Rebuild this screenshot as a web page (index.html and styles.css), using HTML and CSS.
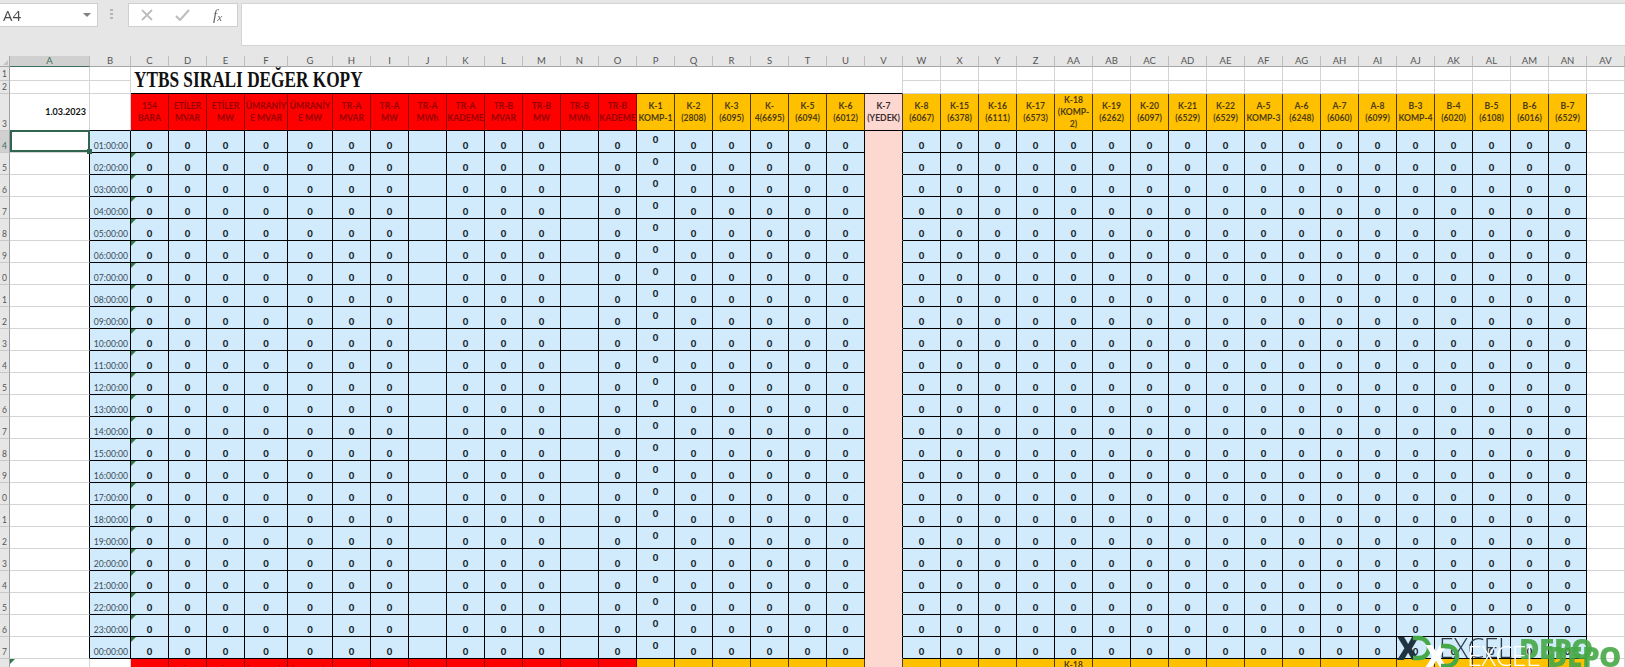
FILE: index.html
```html
<!DOCTYPE html>
<html lang="tr">
<head>
<meta charset="utf-8">
<title>YTBS Sıralı Değer Kopy</title>
<link rel="stylesheet" href="styles.css">
</head>
<body>
<header class="formula-bar">
  <div class="name-box"><span class="name-text">A4</span><span class="name-arrow"></span></div>
  <div class="grip"><i></i><i></i><i></i></div>
  <div class="fx-box">
    <svg class="fx-icon" width="12" height="12" viewBox="0 0 12 12"><path d="M1 1l10 10M11 1L1 11" fill="none" stroke="#bdbdbd" stroke-width="1.8"/></svg>
    <svg class="fx-icon" width="15" height="12" viewBox="0 0 15 12"><path d="M1 7l4 4L14 1" fill="none" stroke="#bdbdbd" stroke-width="2"/></svg>
    <span class="fx-text">f<sub>x</sub></span>
  </div>
  <div class="formula-input"></div>
</header>
<main class="sheet">
  <table class="grid" id="grid"></table>
</main>
<div class="wm wm-dark">
  <span class="wm-x">X</span>
  <svg class="wm-arc" width="22" height="26" viewBox="0 0 22 26"><path d="M2 3h6a10 10 0 0 1 0 20H2" fill="none" stroke="#46a846" stroke-width="4.5"/></svg>
  <span class="wm-excel">EXCEL</span>
  <span class="wm-depo">DEPO</span>
</div>
<div class="wm wm-light">
  <span class="wm-x">X</span>
  <svg class="wm-arc" width="22" height="26" viewBox="0 0 22 26"><path d="M2 3h6a10 10 0 0 1 0 20H2" fill="none" stroke="#46a846" stroke-width="4.5"/></svg>
  <span class="wm-excel">EXCEL</span>
  <span class="wm-depo">DEPO</span>
</div>
<script src="script.js"></script>
</body>
</html>
```
FILE: styles.css
```css
* { box-sizing: border-box; }
html, body { margin: 0; height: 100%; }
body {
  position: relative;
  width: 1625px;
  height: 667px;
  overflow: hidden;
  background: #e6e6e6;
  font-family: Lato, "Open Sans", sans-serif;
}

/* formula bar */
.formula-bar {
  display: flex;
  align-items: flex-start;
  height: 56px;
  padding-top: 3px;
  background: #e6e6e6;
  filter: blur(.4px);
}
.name-box {
  display: flex;
  align-items: center;
  justify-content: space-between;
  width: 98px;
  height: 24px;
  padding: 0 6px 0 3px;
  background: #fff;
  border: 1px solid #cfcfcf;
  border-left: 0;
}
.name-text { font: 15px "Open Sans", sans-serif; color: #4a4a4a; }
.name-arrow {
  width: 0; height: 0;
  border-left: 4px solid transparent;
  border-right: 4px solid transparent;
  border-top: 4px solid #808080;
}
.grip { display: flex; flex-direction: column; gap: 2px; width: 30px; padding: 6px 0 0 12px; }
.grip i { width: 3px; height: 2px; background: #b5b5b5; }
.fx-box {
  display: flex;
  align-items: center;
  width: 110px;
  height: 24px;
  padding-left: 12px;
  gap: 22px;
  background: #fff;
  border: 1px solid #cfcfcf;
}
.fx-text { font: italic 15px "Liberation Serif", serif; color: #666; margin-left: 1px; }
.fx-text sub { font-size: 11px; vertical-align: -1px; }
.formula-input {
  flex: 1;
  height: 43px;
  margin-left: 3px;
  background: #fff;
  border: 1px solid #d4d4d4;
  border-right: 0;
}

/* sheet */
.sheet { height: 611px; overflow: hidden; background: #fff; filter: blur(.4px); }
.grid {
  table-layout: fixed;
  width: 1625px;
  border-collapse: separate;
  border-spacing: 0;
  font-size: 9px;
}
.grid th, .grid td {
  padding: 0;
  overflow: hidden;
  white-space: nowrap;
  border-right: 1px solid #d4d4d4;
  border-bottom: 1px solid #d4d4d4;
  color: #17242c;
  font-weight: 700;
  line-height: 12px;
  text-align: center;
}
.col-rn { width: 10px; }
.col-a { width: 80px; }
.col-b { width: 41px; }
.col-f { width: 43px; }
.col-g { width: 45px; }
.col-n { width: 38px; }

.row-head { height: 11px; }
.row-1 { height: 14px; }
.row-2 { height: 13px; }
.row-3, .row-28 { height: 36px; }
.row-data { height: 22px; }

/* sheet headings */
.grid .col-head {
  background: #e6e6e6;
  border-right: 1px solid #bdbdbd;
  border-bottom: 1px solid #a6a6a6;
  color: #555;
  font-weight: 400;
  font-size: 9.5px;
  line-height: 10px;
}
.grid .col-head.active {
  background: #d0d0d0;
  border-bottom: 1px solid #3d6e58;
  color: #3d6e58;
}
.grid .corner { position: relative; border-right: 1px solid #a6a6a6; }
.corner::after {
  content: "";
  position: absolute;
  right: 1px;
  bottom: 1px;
  width: 0; height: 0;
  border-left: 5px solid transparent;
  border-bottom: 5px solid #c4c4c4;
}
.grid .row-num {
  background: #e6e6e6;
  border-right: 1px solid #9e9e9e;
  border-bottom: 1px solid #c8c8c8;
  color: #555;
  font-weight: 400;
  font-size: 8.5px;
  line-height: 11px;
  vertical-align: bottom;
  text-align: center;
}
.grid .row-num.active { background: #d0d0d0; color: #3d6e58; }

/* content */
.grid .title {
  background: #fff;
  border-bottom: 1px solid #000;
  text-align: left;
  padding-left: 3px;
  font: 700 23px/26px "Liberation Serif", serif;
  color: #111;
}
.title-text { display: inline-block; transform: scaleX(.75); transform-origin: left center; }
.grid .date { text-align: right; padding-right: 3px; vertical-align: middle; font-size: 9px; color: #111; }
.grid .hd { vertical-align: middle; font-size: 8.6px; border-top: 0; }
.grid .hd.red { background: #ff0000; color: #960000; border-right-color: #8f0000; border-bottom-color: #000; }
.grid .hd.org { background: #ffc000; color: #4c3c10; border-right-color: #4a3a08; border-bottom-color: #000; }
.grid .hd.pch { background: #fcd8d1; color: #3a2c2c; border-right-color: #4a3a3a; border-bottom-color: #000; }
.grid .top-line { border-bottom-color: #000; }
.grid .edge { border-right-color: #000; }
.grid .time {
  background: #d1ebfc;
  border-right-color: #000;
  border-bottom-color: #000;
  color: #3b4a55;
  font-weight: 400;
  font-size: 8.6px;
  vertical-align: bottom;
  text-align: right;
  padding-right: 2px;
}
.grid .val {
  background: #d1ebfc;
  border-right-color: #000;
  border-bottom-color: #000;
  font-size: 9.5px;
  font-weight: 900;
  vertical-align: bottom;
}
.grid .val.mid { vertical-align: middle; padding-bottom: 3px; }
.grid .val.pch { background: #fcd8d1; border-bottom-color: #fcd8d1; }
.tick { position: relative; }
.tick::before {
  content: "";
  position: absolute;
  left: 0;
  top: 0;
  width: 0; height: 0;
  border-top: 5px solid #2f7a46;
  border-right: 5px solid transparent;
}
.sel { position: relative; }
.sel::before {
  content: "";
  position: absolute;
  inset: -1px -1px 0 0;
  border: 2px solid #31654f;
}
.sel::after {
  content: "";
  position: absolute;
  right: -3px;
  bottom: -2px;
  width: 5px;
  height: 5px;
  background: #31654f;
}
.grid .sel, .grid .tick { overflow: visible; }

/* watermark */
.wm {
  position: absolute;
  display: flex;
  align-items: center;
  height: 28px;
  font-family: "Open Sans", sans-serif;
  line-height: 28px;
}
.wm-dark { left: 1397px; top: 634px; }
.wm-light { left: 1425px; top: 642px; }
.wm-x { width: 17px; font-size: 31px; font-weight: 800; }
.wm-dark .wm-x { color: #1f3340; }
.wm-light .wm-x { color: #fff; }
.wm-arc { margin: 0 6px 0 -3px; flex: none; }
.wm-excel { width: 80px; font-size: 27px; font-weight: 300; letter-spacing: -.5px; }
.wm-dark .wm-excel { color: #2d3d48; }
.wm-light .wm-excel { color: #fff; }
.wm-depo { font-size: 28px; font-weight: 800; letter-spacing: -.5px; color: #46a846; opacity: .9; }
```
FILE: script.js
```js
var letters = ["A","B","C","D","E","F","G","H","I","J","K","L","M","N","O","P","Q","R","S","T","U","V","W","X","Y","Z","AA","AB","AC","AD","AE","AF","AG","AH","AI","AJ","AK","AL","AM","AN","AV"];
var heads = ["154|BARA","ETİLER|MVAR","ETİLER|MW","ÜMRANİY|E MVAR","ÜMRANİY|E MW","TR-A|MVAR","TR-A|MW","TR-A|MWh","TR-A|KADEME","TR-B|MVAR","TR-B|MW","TR-B|MWh","TR-B|KADEME",
"K-1|KOMP-1","K-2|(2808)","K-3|(6095)","K-|4(6695)","K-5|(6094)","K-6|(6012)","K-7|(YEDEK)","K-8|(6067)","K-15|(6378)","K-16|(6111)","K-17|(6573)","K-18|(KOMP-|2)","K-19|(6262)","K-20|(6097)","K-21|(6529)","K-22|(6529)","A-5|KOMP-3","A-6|(6248)","A-7|(6060)","A-8|(6099)","B-3|KOMP-4","B-4|(6020)","B-5|(6108)","B-6|(6016)","B-7|(6529)"];
var html = '<colgroup><col class="col-rn">';
letters.forEach(function (l) {
  var c = l === "A" ? "col-a" : l === "B" ? "col-b" : l === "F" ? "col-f" : l === "G" ? "col-g" : "col-n";
  html += '<col class="' + c + '">';
});
html += '</colgroup><thead><tr class="row-head"><th class="col-head corner"></th>';
letters.forEach(function (l) {
  html += '<th class="col-head' + (l === "A" ? " active" : "") + '">' + l + '</th>';
});
html += '</tr></thead><tbody>';

function plain(n) { var s = ""; for (var i = 0; i < n; i++) s += "<td></td>"; return s; }
function headerCells() {
  return heads.map(function (h, i) {
    var kind = i < 13 ? "red" : i === 19 ? "pch" : "org";
    return '<td class="hd ' + kind + '">' + h.split("|").join("<br>") + '</td>';
  }).join("");
}

html += '<tr class="row-1"><th class="row-num">1</th><td></td><td></td><td class="title" colspan="20" rowspan="2"><span class="title-text">YTBS SIRALI DEĞER KOPY</span></td>' + plain(19) + '</tr>';
html += '<tr class="row-2"><th class="row-num">2</th><td></td><td></td>' + plain(19) + '</tr>';
html += '<tr class="row-3"><th class="row-num">3</th><td class="date">1.03.2023</td><td class="top-line"></td>' + headerCells() + '<td></td></tr>';

for (var r = 4; r <= 27; r++) {
  var hour = r - 3 === 24 ? 0 : r - 3;
  var time = (hour < 10 ? "0" : "") + hour + ":00:00";
  html += '<tr class="row-data"><th class="row-num' + (r === 4 ? " active" : "") + '">' + (r % 10) + '</th>';
  html += r === 4 ? '<td class="sel"></td>' : '<td class="edge"></td>';
  html += '<td class="time">' + time + '</td>';
  heads.forEach(function (h, i) {
    var cls = "val";
    var text = "0";
    if (i === 7 || i === 11) text = "";
    if (i === 19) { cls += " pch"; text = ""; }
    if (i === 13) cls += " mid";
    if (i === 0 && r > 4) cls += " tick";
    html += '<td class="' + cls + '">' + text + '</td>';
  });
  html += '<td></td></tr>';
}
html += '<tr class="row-28"><th class="row-num">8</th><td class="tick"></td><td></td>' + headerCells() + '<td></td></tr>';
html += '</tbody>';
document.getElementById("grid").innerHTML = html;
```
